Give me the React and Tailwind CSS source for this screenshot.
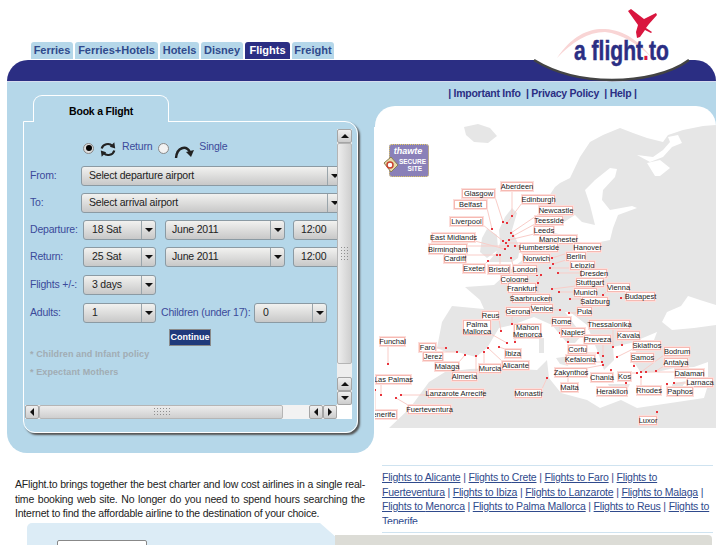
import React from 'react';

const tabs = [
  { name: 'Ferries', w: 'w-[42px]' },
  { name: 'Ferries+Hotels', w: 'w-[83px]' },
  { name: 'Hotels', w: 'w-[39px]' },
  { name: 'Disney', w: 'w-[42px]' },
  { name: 'Flights', w: 'w-[45px]', active: true },
  { name: 'Freight', w: 'w-[42px]' },
];

// name, left, top, right, bottom, dot x, dot y (page coordinates)
const cities = [
  ['Aberdeen', 501, 182, 533, 190, 512, 216],
  ['Glasgow', 462, 189, 495, 197, 503, 222],
  ['Belfast', 454, 200, 487, 208, 492, 229],
  ['Edinburgh', 522, 195, 555, 203, 507, 223],
  ['Newcastle', 539, 206, 573, 214, 511, 233],
  ['Liverpool', 450, 217, 483, 225, 503, 241],
  ['Teesside', 535, 216, 563, 224, 513, 236],
  ['Leeds', 534, 226, 554, 234, 509, 240],
  ['Manchester', 540, 235, 577, 243, 506, 243],
  ['East Midlands', 432, 233, 475, 241, 505, 249],
  ['Birmingham', 429, 244, 467, 253, 508, 246],
  ['Humberside', 520, 243, 558, 251, 515, 246],
  ['Hanover', 574, 243, 601, 251, 552, 258],
  ['Cardiff', 444, 254, 466, 262, 497, 255],
  ['Norwich', 523, 254, 550, 262, 520, 252],
  ['Berlin', 566, 252, 586, 260, 553, 264],
  ['Leipzig', 570, 261, 595, 269, 550, 268],
  ['Exeter', 463, 264, 485, 272, 488, 261],
  ['Bristol', 488, 265, 510, 273, 500, 255],
  ['London', 513, 265, 537, 273, 511, 258],
  ['Dresden', 581, 269, 607, 277, 558, 273],
  ['Cologne', 501, 275, 528, 283, 537, 275],
  ['Stuttgart', 576, 278, 604, 286, 552, 289],
  ['Vienna', 607, 283, 630, 291, 603, 295],
  ['Frankfurt', 508, 283, 536, 292, 541, 275],
  ['Munich', 574, 288, 597, 296, 559, 292],
  ['Saarbrucken', 512, 294, 550, 302, 538, 283],
  ['Salzburg', 582, 297, 608, 305, 570, 299],
  ['Budapest', 626, 292, 655, 300, 621, 298],
  ['Gerona', 506, 307, 530, 315, 512, 324],
  ['Venice', 531, 304, 553, 312, 560, 310],
  ['Pula', 577, 307, 592, 315, 569, 313],
  ['Reus', 482, 311, 499, 319, 501, 331],
  ['Rome', 552, 317, 571, 325, 560, 333],
  ['Palma\nMallorca', 463, 320, 491, 334, 507, 343],
  ['Mahon\nMenorca', 514, 324, 541, 337, 515, 342],
  ['Thessalonika', 589, 320, 630, 328, 613, 347],
  ['Naples', 561, 328, 585, 336, 568, 342],
  ['Kavala', 617, 331, 640, 339, 622, 345],
  ['Preveza', 584, 335, 611, 343, 603, 356],
  ['Funchal', 380, 337, 405, 345, 388, 364],
  ['Faro', 419, 343, 436, 351, 446, 348],
  ['Skiathos', 633, 341, 661, 349, 617, 357],
  ['Corfu', 568, 345, 587, 353, 598, 353],
  ['Bodrum', 664, 347, 690, 355, 641, 372],
  ['Jerez', 423, 352, 443, 360, 457, 352],
  ['Ibiza', 505, 349, 521, 357, 499, 347],
  ['Samos', 631, 353, 654, 361, 634, 366],
  ['Kefalonia', 566, 355, 595, 363, 602, 362],
  ['Antalya', 664, 358, 688, 366, 656, 371],
  ['Malaga', 435, 362, 459, 370, 465, 355],
  ['Alicante', 502, 361, 529, 369, 488, 348],
  ['Murcia', 479, 364, 501, 372, 484, 352],
  ['Zakynthos', 555, 368, 587, 376, 603, 365],
  ['Dalaman', 675, 369, 704, 377, 646, 372],
  ['Almeria', 452, 372, 477, 380, 476, 356],
  ['Chania', 591, 373, 613, 381, 611, 370],
  ['Kos', 618, 372, 631, 380, 637, 373],
  ['Las Palmas', 376, 375, 411, 383, 381, 395],
  ['Larnaca', 687, 378, 713, 386, 674, 383],
  ['Malta', 561, 383, 578, 391, 568, 377],
  ['Rhodes', 637, 386, 661, 394, 641, 377],
  ['Paphos', 667, 387, 693, 395, 667, 384],
  ['Lanzarote Arrecife', 428, 389, 484, 397, 401, 395],
  ['Monastir', 515, 389, 542, 397, 547, 378],
  ['Heraklion', 597, 387, 627, 395, 626, 383],
  ['Fuerteventura', 408, 405, 451, 413, 396, 398],
  ['Tenerife', 367, 410, 397, 418, 375, 390],
  ['Luxor', 639, 416, 657, 424, 657, 412],
];

const links = ['Alicante', 'Crete', 'Faro', 'Fuerteventura', 'Ibiza', 'Lanzarote', 'Malaga', 'Menorca', 'Palma Mallorca', 'Reus', 'Tenerife'];

const clamp = (v, a, b) => Math.min(Math.max(v, a), b);

const Triangle = ({ dir = 'down' }) => {
  const points = {
    down: '0,2 8,2 4,6',
    up: '0,6 8,6 4,2',
    left: '6,0 6,8 2,4',
    right: '2,0 2,8 6,4',
  };
  return (
    <svg width="8" height="8" viewBox="0 0 8 8">
      <polygon points={points[dir]} fill="#111" />
    </svg>
  );
};

const Select = ({ text, w, pad = 'pl-2', className = '' }) => (
  <div className={`${w} h-[20px] shrink-0 flex rounded-[3px] border border-[#8b9aa3] bg-gradient-to-b from-[#f2f2f0] to-[#c8c8c8] text-[#222] ${className}`}>
    <div className={`flex-1 flex items-center whitespace-nowrap ${pad}`}>{text}</div>
    <div className="w-[14px] flex items-center justify-center border-l border-[#9aa5ab]">
      <Triangle />
    </div>
  </div>
);

const ScrollBtn = ({ dir, className = '' }) => (
  <div className={`w-[14px] h-[14px] shrink-0 flex items-center justify-center rounded-[2px] border border-[#a5a5a5] bg-gradient-to-b from-[#f0f0f0] to-[#cdcdcd] ${className}`}>
    <Triangle dir={dir} />
  </div>
);

const Grip = ({ className }) => (
  <div className={`bg-[radial-gradient(#8f8f8f_0.6px,transparent_0.8px)] bg-[length:3px_3px] ${className}`} />
);

const BookingForm = () => (
  <div className="ml-[16px] mt-[13px]">
    <div className="relative z-10 ml-[10px] w-[136px] h-[27px] -mb-px rounded-t-[9px] border border-b-0 border-white bg-[#b5d7e9] flex items-center justify-center pt-[5px] text-[10.5px] tracking-[-0.2px] font-bold text-black">
      Book a Flight
    </div>
    <div className="relative w-[335px] h-[312px] rounded-tr-[13px] rounded-b-[12px] border border-white shadow-[2px_2px_2px_#555] overflow-hidden">
      <div className="w-[314px] h-[283px] overflow-hidden pt-[19px] text-[10.5px] tracking-[-0.2px] text-[#3b4a9a]">
        <div className="h-[17px] flex items-center pl-[59px]">
          <div className="w-[11px] h-[11px] rounded-full border border-[#888] bg-[#ddd] flex items-center justify-center -mt-[3px]">
            <div className="w-[6px] h-[6px] rounded-full bg-black" />
          </div>
          <svg width="18" height="17" viewBox="0 0 20 18" className="ml-[5px]" fill="none" stroke="#222" strokeWidth="2.4">
            <path d="M3 8 A7 6.5 0 0 1 15 5" />
            <path d="M17 10 A7 6.5 0 0 1 5 13" />
            <polygon points="17,1 18,8 12,6" fill="#222" stroke="none" />
            <polygon points="3,17 2,10 8,12" fill="#222" stroke="none" />
          </svg>
          <span className="ml-[5px] -mt-[6px]">Return</span>
          <div className="ml-[6px] w-[11px] h-[11px] rounded-full border border-[#888] bg-[#f2f2f2] -mt-[3px]" />
          <svg width="21" height="16" viewBox="0 0 21 16" className="ml-[5px] mt-[3px]" fill="none" stroke="#222" strokeWidth="2.4">
            <path d="M2 15 C3 4 12 2 16 9" />
            <polygon points="20,7 17,14 12,9" fill="#222" stroke="none" />
          </svg>
          <span className="ml-[4px] -mt-[6px]">Single</span>
        </div>
        <div className="mt-[8px] flex items-center pl-[6px]">
          <span className="w-[51px] shrink-0">From:</span>
          <Select text="Select departure airport" w="w-[261px]" pad="pl-[7px]" />
        </div>
        <div className="mt-[7px] flex items-center pl-[6px]">
          <span className="w-[51px] shrink-0">To:</span>
          <Select text="Select arrival airport" w="w-[261px]" pad="pl-[7px]" />
        </div>
        <div className="mt-[7px] flex items-center pl-[6px]">
          <span className="w-[53px] shrink-0">Departure:</span>
          <Select text="18 Sat" w="w-[73px]" />
          <Select text="June 2011" w="w-[120px]" pad="pl-[6px]" className="ml-[9px]" />
          <Select text="12:00" w="w-[70px]" pad="pl-[7px]" className="ml-[8px]" />
        </div>
        <div className="mt-[7px] flex items-center pl-[6px]">
          <span className="w-[53px] shrink-0">Return:</span>
          <Select text="25 Sat" w="w-[73px]" />
          <Select text="June 2011" w="w-[120px]" pad="pl-[6px]" className="ml-[9px]" />
          <Select text="12:00" w="w-[70px]" pad="pl-[7px]" className="ml-[8px]" />
        </div>
        <div className="mt-[8px] flex items-center pl-[6px]">
          <span className="w-[53px] shrink-0">Flights +/-:</span>
          <Select text="3 days" w="w-[73px]" />
        </div>
        <div className="mt-[8px] flex items-center pl-[6px]">
          <span className="w-[53px] shrink-0">Adults:</span>
          <Select text="1" w="w-[73px]" />
          <span className="w-[98px] shrink-0 pl-[5px] whitespace-nowrap">Children (under 17):</span>
          <Select text="0" w="w-[73px]" />
        </div>
        <div className="ml-[145px] mt-[6px] w-[42px] h-[17px] border border-[#8a8a8a] bg-[#1f3a7c] flex items-center justify-center text-[9px] tracking-normal font-bold text-white">
          Continue
        </div>
        <div className="ml-[6px] -mt-px text-[9px] leading-[18px] font-bold tracking-[0.1px] text-[#a1acb3]">
          <div>* Children and Infant policy</div>
          <div>* Expectant Mothers</div>
        </div>
      </div>
      {/* vertical scrollbar */}
      <div className="absolute left-[313px] top-[7px] w-[15px] h-[276px] bg-[#eeeeee] flex flex-col">
        <ScrollBtn dir="up" className="w-[15px]" />
        <div className="w-[15px] h-[221px] shrink-0 relative border border-[#b5b5b5] rounded-[2px] bg-gradient-to-r from-[#ededed] to-[#cfcfcf] flex items-center justify-center">
          <Grip className="w-[10px] h-[16px]" />
        </div>
        <div className="flex-1" />
        <ScrollBtn dir="up" className="w-[15px]" />
        <ScrollBtn dir="down" className="w-[15px]" />
      </div>
      {/* horizontal scrollbar */}
      <div className="absolute left-[1px] top-[283px] w-[327px] h-[14px] flex bg-[#f2f2f2]">
        <ScrollBtn dir="left" />
        <div className="w-[244px] shrink-0 border border-[#b5b5b5] rounded-[2px] bg-gradient-to-b from-[#ededed] to-[#cfcfcf] flex items-center justify-center">
          <Grip className="w-[17px] h-[10px]" />
        </div>
        <div className="w-[26px] shrink-0" />
        <ScrollBtn dir="left" />
        <ScrollBtn dir="right" />
        <div className="flex-1 bg-white" />
      </div>
    </div>
  </div>
);

const EuropeMap = () => (
  <div className="relative w-[341px] h-[322px] rounded-t-[20px] overflow-hidden bg-white">
    <svg className="absolute inset-0" width="341" height="322" viewBox="375 106 341 322">
      <g fill="#e6e6e6">
        <path d="M464 127 L478 124 L490 128 L497 136 L488 143 L474 142 L466 135 Z" />
        <path d="M560 183 L570 178 L580 157 L590 142 L603 135 L620 128 L633 133 L647 138 L663 142 L668 135 L683 130 L703 126 L716 125 L716 428 L389 428 L410 408 L429 382 L445 372 L470 369 L500 368 L537 370 L547 360 L549 378 L561 393 L587 400 L600 408 L621 400 L637 408 L657 405 L704 398 L708 385 L708 362 L694 367 L674 368 L657 372 L641 373 L634 362 L637 345 L654 340 L657 332 L631 343 L613 347 L614 360 L604 370 L597 350 L587 325 L570 312 L565 312 L582 335 L575 343 L567 343 L552 325 L534 317 L512 325 L499 328 L487 348 L476 357 L457 352 L446 352 L437 348 L442 322 L452 306 L484 309 L480 300 L465 287 L494 285 L515 266 L535 250 L552 247 L555 233 L566 236 L570 245 L595 243 L610 240 L613 228 L618 215 L637 208 L632 206 L610 210 L602 200 L603 190 L615 177 L617 169 L610 168 L595 180 L585 190 L590 205 L595 225 L582 222 L575 215 L564 222 L552 212 L549 196 L555 187 Z" />
        <path d="M512 208 L517 213 L512 230 L520 248 L518 258 L512 262 L488 262 L496 253 L500 243 L499 230 L505 217 Z" />
        <path d="M487 229 L497 235 L498 250 L487 258 L480 252 L482 238 Z" />
        <path d="M539 338 L544 338 L544 353 L539 353 Z" />
        <path d="M556 358 L570 356 L568 366 L560 364 Z" />
        <path d="M608 384 L630 384 L628 388 L610 388 Z" />
        <path d="M672 384 L686 381 L680 390 L672 388 Z" />
      </g>
      <path d="M662 322 L667 312 L681 306 L688 296 L700 300 L716 305 L716 325 L694 328 L672 330 Z" fill="#fff" />
      <path d="M637 155 L650 162 L663 157 L672 147 L682 143 L678 135 L668 137 L670 142 L663 150 L653 157 Z M647 163 L655 176 L660 176 L670 168 L660 160 Z" fill="#fff" />
      {cities.map(([name, l, t, r, b, x, y]) => (
        <line key={name} x1={clamp(x, l, r)} y1={clamp(y, t, b)} x2={x} y2={y} stroke="#f9cdc8" strokeWidth="1" />
      ))}
      {cities.map(([name, , , , , x, y]) => (
        <rect key={name} x={x - 1} y={y - 1} width="2" height="2" fill="#e8343c" />
      ))}
    </svg>
    {cities.map(([name, l, t, r, b]) => (
      <div
        key={name}
        className="absolute flex items-center justify-center whitespace-pre text-center text-[7.5px] leading-[7px] text-[#222] bg-white border border-[#f6b9b2] shadow-[0_0_0_1px_#fcdedb]"
        style={{ left: l - 375, top: t - 106, width: r - l, height: b - t + 1 }}
      >
        {name}
      </div>
    ))}
    {/* secure site seal */}
    <div className="absolute left-[14px] top-[38px] w-[40px] h-[33px] rounded-[3px] border border-dotted border-[#e8d060] bg-[#8a80b8] text-white text-right pr-[2px]">
      <div className="text-[9px] leading-[10px] italic font-bold text-center pt-[1px]">thawte</div>
      <div className="text-[6.5px] leading-[7px] font-bold mt-[2px]">SECURE</div>
      <div className="text-[6.5px] leading-[7px] font-bold pr-[4px]">SITE</div>
    </div>
    <svg className="absolute left-[8px] top-[50px]" width="16" height="18" viewBox="0 0 16 18">
      <polygon points="1,7 8,1 15,9 8,16" fill="#e6d9a8" stroke="#8a7d50" />
      <circle cx="7" cy="9" r="3" fill="#fff" stroke="#c8402e" strokeWidth="1.5" />
    </svg>
  </div>
);

const Logo = () => (
  <div className="absolute left-[520px] top-0 w-[207px] h-[82px] pointer-events-none">
    <svg className="absolute inset-0" width="207" height="82" viewBox="520 0 207 82">
      <path d="M534 60 C560 76 590 80 612 80 C640 80 670 74 689 60 Z" fill="#fff" />
      <path d="M534 60 C560 76 590 80 612 80 C640 80 670 74 689 60" fill="none" stroke="#444" strokeWidth="2.5" />
      <path d="M557 58 C572 35 590 28 605 29 C625 30 640 42 652 58 C638 44 622 34 605 32 C588 32 572 42 557 58 Z" fill="#f9d5d5" />
      <polygon points="628,11 631,9 644,19 656,13 657,15 649,24 646,28 652,32 651,33 645,30 640,37 637,38 636,32 638,25" fill="#d9163f" />
    </svg>
    <div className="absolute left-[54px] top-[38px] origin-left scale-x-[0.78] text-[27px] leading-[27px] font-bold [-webkit-text-stroke:0.5px_#2b2e83] text-[#2b2e83] whitespace-nowrap">
      a flight<span className="text-[#d9163f] [-webkit-text-stroke:0]">.</span>to
    </div>
  </div>
);

const App = () => {
  return (
    <div className="relative w-[727px] h-[545px] overflow-hidden bg-white font-['Liberation_Sans',Arial,sans-serif]">
      <div className="h-[60px] pl-[31px] flex items-end">
        <div className="flex items-start gap-[2px] h-[19px]">
          {tabs.map((t) => (
            <div
              key={t.name}
              className={`${t.w} h-[17px] mt-px rounded-t-[3px] flex items-center justify-center text-[11px] font-bold whitespace-nowrap ${t.active ? 'bg-[#2b2e83] text-white' : 'bg-[#b5d7e9] text-[#2f4a8c]'}`}
            >
              {t.name}
            </div>
          ))}
        </div>
      </div>

      <div className="ml-[7px] w-[709px] h-[21px] rounded-t-[21px] bg-[#2b2e83]" />
      <div className="ml-[7px] w-[709px] h-px bg-[#d6dcef]" />

      <div className="ml-[7px] w-[709px] h-[371px] flex">
        <div className="w-[367px] shrink-0 rounded-b-[20px] bg-[#b5d7e9] overflow-hidden">
          <BookingForm />
        </div>
        <div className="w-[342px] pl-px bg-[linear-gradient(#b5d7e9_45px,white_45px)]">
          <div className="h-[24px] flex items-center justify-center pb-[1px] pr-[6px] text-[10.5px] tracking-[-0.25px] font-bold text-[#2b2e83] whitespace-pre">
            | Important Info  | Privacy Policy  | Help |
          </div>
          <EuropeMap />
        </div>
      </div>

      <div className="relative h-[92px] flex">
        <div className="ml-[15px] w-[350px] shrink-0">
          <p className="pt-[24px] h-[70px] text-[10.5px] tracking-[-0.2px] leading-[14.5px] text-justify text-[#222]">
            AFlight.to brings together the best charter and low cost airlines in a single real-time booking web site. No longer do you need to spend hours searching the Internet to find the affordable airline to the destination of your choice.
          </p>
          <div className="ml-[12px] w-[318px] h-[22px] bg-[#dcecf6] [clip-path:polygon(0_0,293px_0,318px_100%,0_100%)] rounded-tl-[5px] pl-[30px] pt-[17px]">
            <div className="w-[90px] h-[10px] rounded-t-[2px] border border-[#888] bg-white" />
          </div>
        </div>
        <div className="ml-[17px] mt-[12px] w-[331px] h-[68px] border-y border-[#cfe3f0]">
          <div className="pt-[4px] h-[58px] overflow-hidden text-[10.5px] tracking-[-0.2px] leading-[14.5px] text-[#2f4a8c]">
            {links.map((city, i) => (
              <span key={city}>
                <span className="underline">Flights to {city}</span>
                {i < links.length - 1 ? ' | ' : ''}
              </span>
            ))}
          </div>
        </div>
        <div className="absolute left-[335px] top-[82px] w-[377px] h-[12px] rounded-tr-[4px] bg-[#dcdcd6]" />
      </div>

      <Logo />
    </div>
  );
};

export default App;
